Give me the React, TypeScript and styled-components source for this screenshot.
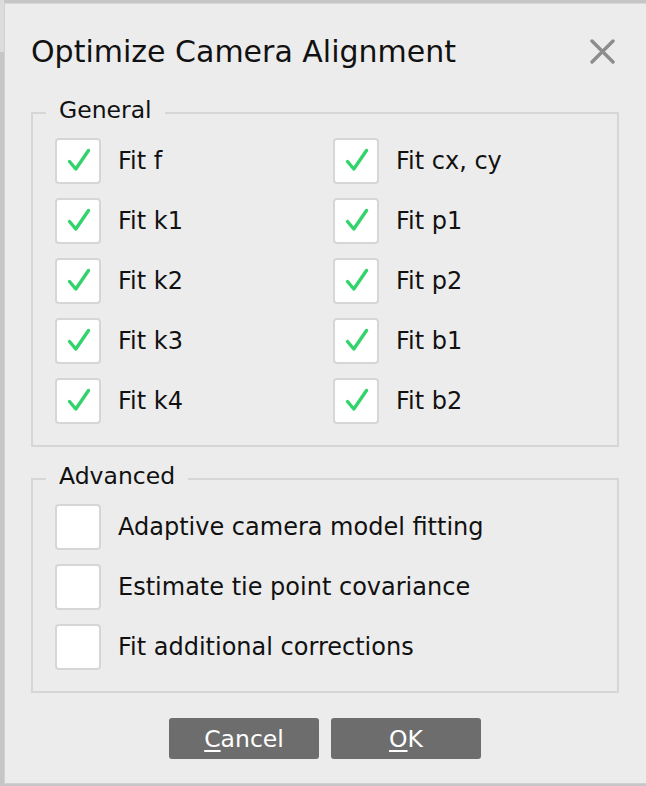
import { ReactNode } from 'react'
import styled, { createGlobalStyle } from 'styled-components'

const GlobalStyle = createGlobalStyle`
  html, body {
    margin: 0;
    padding: 0;
    background: #c6c6c6;
    overflow: hidden;
  }
  body {
    font-family: "DejaVu Sans", "Liberation Sans", sans-serif;
    color: #111;
  }
`

const Screen = styled.div`
  display: flex;
  width: 646px;
  height: 786px;
  overflow: hidden;
`

const Backdrop = styled.div`
  width: 4px;
  flex-shrink: 0;
  display: flex;
  flex-direction: column;
`

const BackdropTop = styled.div`
  height: 52px;
  background: #dcdcdc;
`

const Dialog = styled.div`
  box-sizing: border-box;
  width: 642px;
  height: 781px;
  margin-top: 3px;
  flex-shrink: 0;
  background: #ececec;
  border-top: 1px solid #d8d8d8;
  border-left: 1px solid #d2d2d2;
  border-bottom: 1px solid #d0d0d0;
  padding: 30px 27px 0 26px;
  display: flex;
  flex-direction: column;
`

const TitleBar = styled.div`
  display: flex;
  align-items: center;
  justify-content: space-between;
  height: 35px;
`

const Title = styled.h1`
  margin: 0;
  font-size: 30px;
  font-weight: normal;
  line-height: 35px;
`

const CloseButton = styled.button`
  width: 25px;
  height: 25px;
  margin-right: 4px;
  padding: 0;
  border: none;
  background: none;
  display: flex;
`

const Group = styled.section<{ $gap: number }>`
  margin-top: ${({ $gap }) => $gap}px;
  border: 2px solid #d6d6d6;
  padding: 0 22px 21px;
  display: flex;
  flex-direction: column;
`

const GroupTitle = styled.div`
  align-self: flex-start;
  margin: -17px 0 0 -9px;
  padding: 0 13px;
  background: #ececec;
  font-size: 23.5px;
  line-height: 26px;
`

const OptionGrid = styled.div<{ $columns: number }>`
  margin-top: 15px;
  display: grid;
  grid-template-columns: ${({ $columns }) => ($columns === 2 ? '278px 1fr' : '1fr')};
  row-gap: 14px;
`

const OptionRow = styled.label`
  display: flex;
  align-items: center;
  gap: 17px;
  font-size: 24px;
  height: 46px;
`

const Box = styled.span`
  box-sizing: border-box;
  width: 46px;
  height: 46px;
  flex-shrink: 0;
  background: #fff;
  border: 2px solid #d6d6d6;
  border-radius: 4px;
  display: flex;
`

const ButtonBar = styled.div`
  margin-top: 25px;
  display: flex;
  justify-content: center;
  gap: 12px;
`

const Button = styled.button`
  width: 150px;
  height: 41px;
  border: none;
  border-radius: 3px;
  background: #6d6d6d;
  color: #fff;
  font-family: "DejaVu Sans", "Liberation Sans", sans-serif;
  font-size: 23.5px;
  padding: 0;
  u {
    text-decoration-thickness: 2px;
    text-underline-offset: 3px;
  }
`

const CheckMark = () => (
  <svg width="42" height="42" viewBox="0 0 42 42">
    <path
      d="M12.5 21.5 L18.8 29 L31.5 10.5"
      fill="none"
      stroke="#33d36b"
      strokeWidth="3.4"
      strokeLinecap="round"
      strokeLinejoin="round"
    />
  </svg>
)

const Option = ({ label, checked }: { label: string; checked: boolean }) => (
  <OptionRow>
    <Box>{checked && <CheckMark />}</Box>
    {label}
  </OptionRow>
)

const GroupBox = ({
  title,
  gap,
  columns,
  children,
}: {
  title: string
  gap: number
  columns: number
  children: ReactNode
}) => (
  <Group $gap={gap}>
    <GroupTitle>{title}</GroupTitle>
    <OptionGrid $columns={columns}>{children}</OptionGrid>
  </Group>
)

const general = [
  'Fit f',
  'Fit cx, cy',
  'Fit k1',
  'Fit p1',
  'Fit k2',
  'Fit p2',
  'Fit k3',
  'Fit b1',
  'Fit k4',
  'Fit b2',
]

const advanced = [
  'Adaptive camera model fitting',
  'Estimate tie point covariance',
  'Fit additional corrections',
]

export default function App() {
  return (
    <Screen>
      <GlobalStyle />
      <Backdrop>
        <BackdropTop />
      </Backdrop>
      <Dialog>
        <TitleBar>
          <Title>Optimize Camera Alignment</Title>
          <CloseButton aria-label="Close">
            <svg width="25" height="25" viewBox="0 0 25 25">
              <path
                d="M2 2 L23 23 M23 2 L2 23"
                stroke="#8c8c8c"
                strokeWidth="3.4"
                strokeLinecap="round"
              />
            </svg>
          </CloseButton>
        </TitleBar>
        <GroupBox title="General" gap={43} columns={2}>
          {general.map((label) => (
            <Option key={label} label={label} checked />
          ))}
        </GroupBox>
        <GroupBox title="Advanced" gap={31} columns={1}>
          {advanced.map((label) => (
            <Option key={label} label={label} checked={false} />
          ))}
        </GroupBox>
        <ButtonBar>
          <Button>
            <u>C</u>ancel
          </Button>
          <Button>
            <u>O</u>K
          </Button>
        </ButtonBar>
      </Dialog>
    </Screen>
  )
}
